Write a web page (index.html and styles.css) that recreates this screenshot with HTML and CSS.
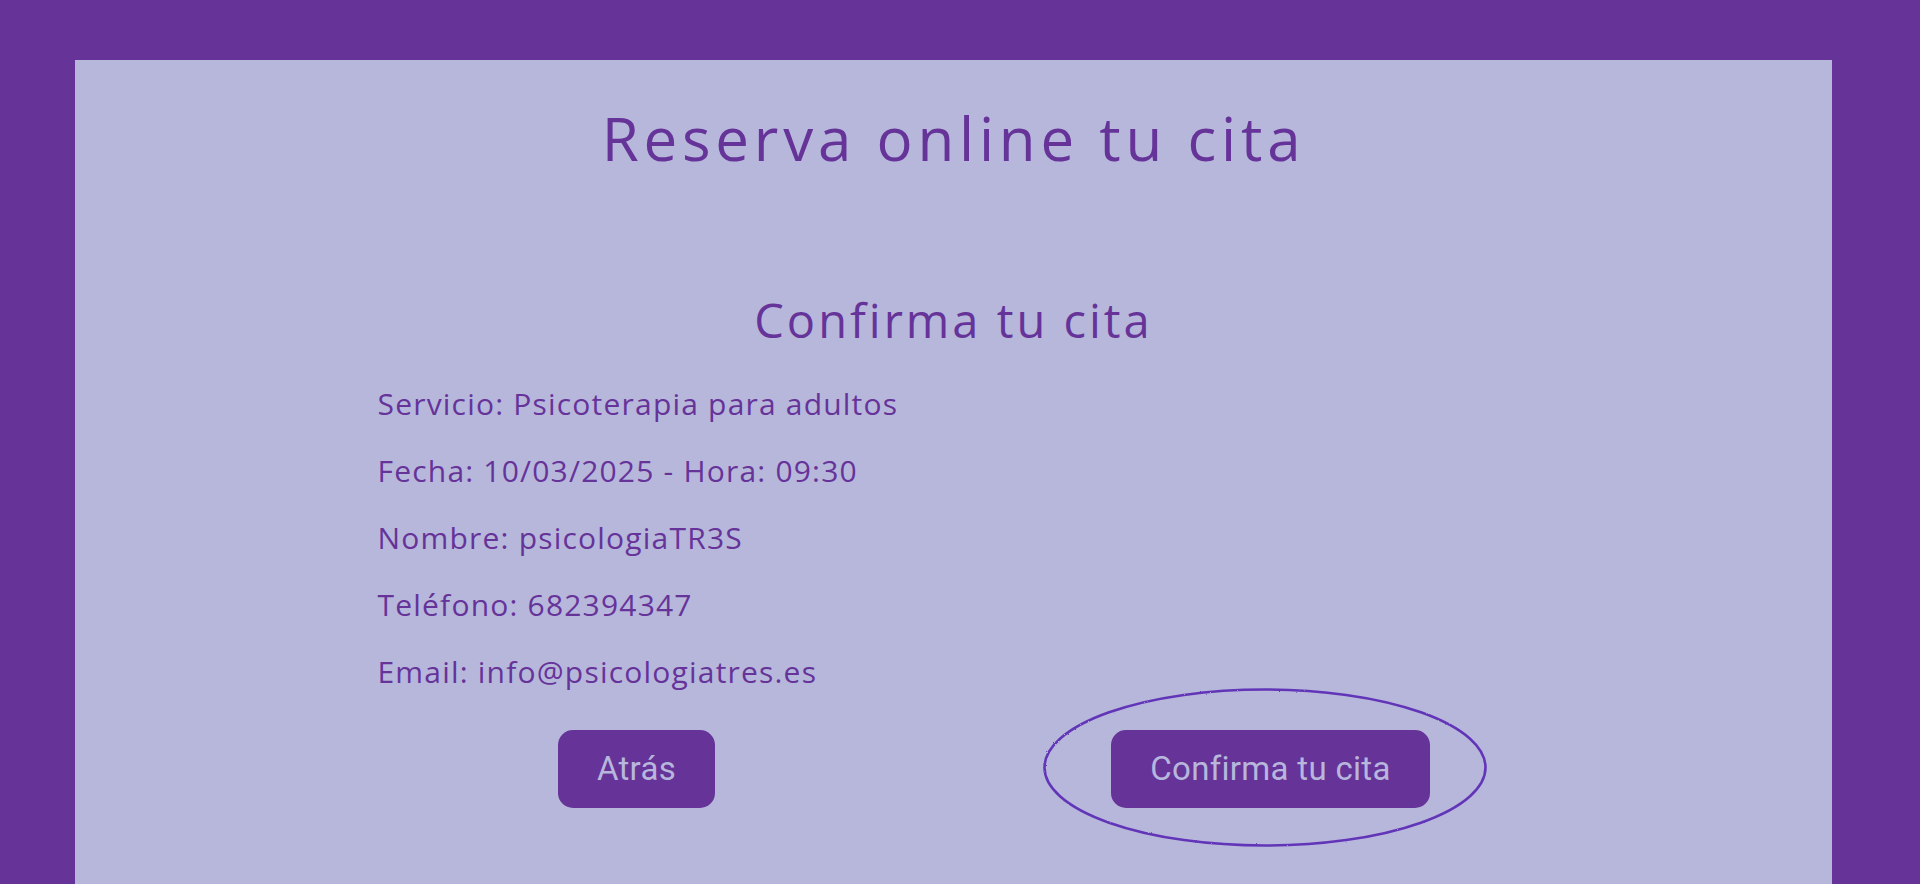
FILE: index.html
```html
<!DOCTYPE html>
<html lang="es">
<head>
<meta charset="utf-8">
<title>Reserva online tu cita</title>
<link rel="stylesheet" href="styles.css">
</head>
<body>
  <main class="panel">
    <h1 class="title">Reserva online tu cita</h1>
    <section class="confirm">
      <h2 class="subtitle">Confirma tu cita</h2>
      <div class="info">
        <p class="line">Servicio: Psicoterapia para adultos</p>
        <p class="line">Fecha: 10/03/2025 - Hora: 09:30</p>
        <p class="line">Nombre: psicologiaTR3S</p>
        <p class="line">Teléfono: 682394347</p>
        <p class="line">Email: info@psicologiatres.es</p>
      </div>
      <div class="actions">
        <div class="slot">
          <button class="btn" type="button">Atrás</button>
        </div>
        <div class="slot">
          <div class="highlight">
            <button class="btn" type="button">Confirma tu cita</button>
            <svg class="ring" width="444" height="159" viewBox="0 0 444 159" aria-hidden="true">
              <defs>
                <filter id="rough" x="-5%" y="-5%" width="110%" height="110%">
                  <feTurbulence type="fractalNoise" baseFrequency="0.9" numOctaves="2" seed="3" result="n"/>
                  <feDisplacementMap in="SourceGraphic" in2="n" scale="1.8"/>
                </filter>
              </defs>
              <ellipse cx="222" cy="79.5" rx="220.5" ry="78" fill="none" stroke="#6236b8" stroke-width="2.6" filter="url(#rough)"/>
            </svg>
          </div>
        </div>
      </div>
    </section>
  </main>
</body>
</html>
```
FILE: styles.css
```css
* { box-sizing: border-box; }

html, body {
  margin: 0;
  height: 884px;
  overflow: hidden;
}

body {
  background: #663399;
  padding-top: 60px;
  font-family: "Open Sans", "Noto Sans", sans-serif;
  color: #663399;
}

.panel {
  margin-left: 75px;
  width: 1757px;
  height: 824px;
  background: #b7b7dc;
  padding-top: 42px;
}

.title {
  margin: 0;
  font-size: 60px;
  line-height: 72px;
  font-weight: 400;
  letter-spacing: 4.8px;
  text-align: center;
}

.confirm {
  width: 1268px;
  margin: 118px auto 0;
}

.subtitle {
  margin: 0;
  font-size: 47px;
  line-height: 56px;
  font-weight: 400;
  letter-spacing: 3px;
  text-align: center;
}

.info {
  margin-top: 22px;
  padding-left: 58px;
}

.line {
  margin: 0;
  font-size: 30px;
  line-height: 67px;
  letter-spacing: 1.2px;
}

.actions {
  margin-top: 25px;
  display: grid;
  grid-template-columns: 1fr 1fr;
}

.slot {
  display: flex;
  justify-content: center;
}

.highlight {
  position: relative;
}

.btn {
  display: block;
  margin: 0;
  border: 0;
  border-radius: 15px;
  background: #663399;
  color: #b7b7dc;
  font-family: Roboto, "Liberation Sans", sans-serif;
  font-size: 33px;
  line-height: 38px;
  letter-spacing: 0.3px;
  padding: 20px 39px;
}

.ring {
  position: absolute;
  left: -68px;
  top: -42px;
  pointer-events: none;
}
```
